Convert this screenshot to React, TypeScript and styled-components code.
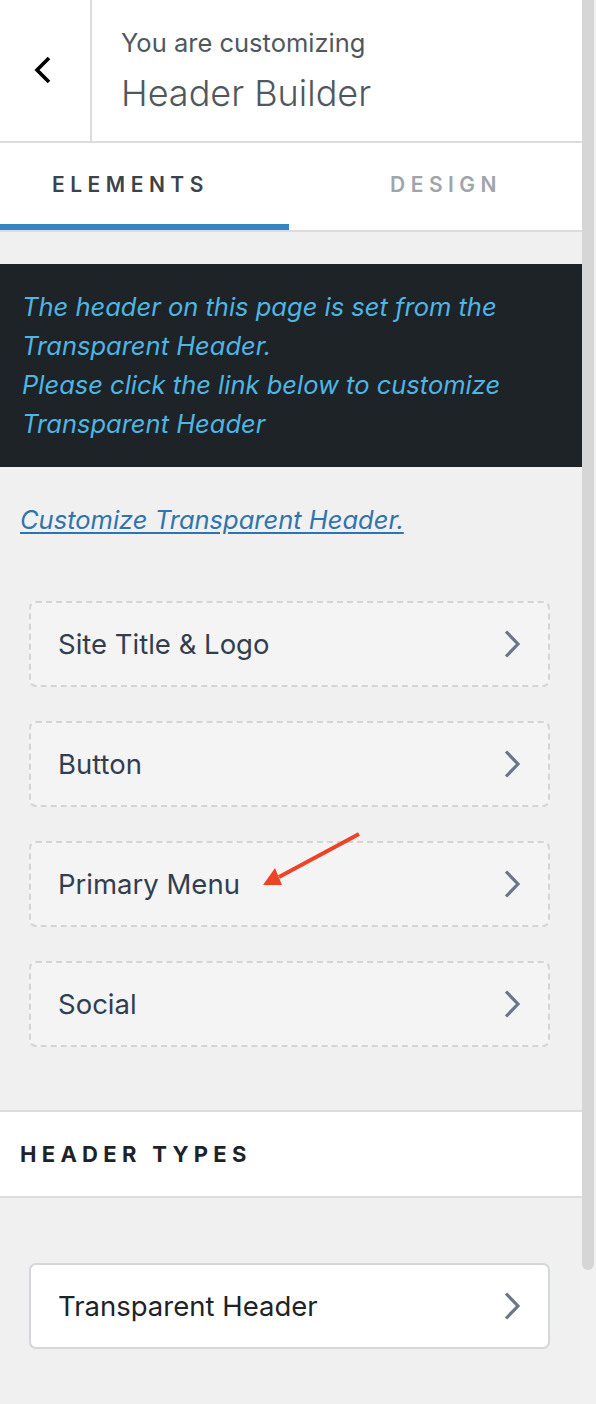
import React, { ReactElement } from 'react';
import styled, { createGlobalStyle } from 'styled-components';

const GlobalStyle = createGlobalStyle`
  html, body {
    margin: 0;
    padding: 0;
    background: #f0f0f1;
  }
  body {
    font-family: Inter, "Noto Sans", "Liberation Sans", sans-serif;
  }
  * {
    box-sizing: border-box;
  }
`;

const Page = styled.div`
  display: flex;
  width: 596px;
  height: 1404px;
  overflow: hidden;
  background: #f0f0f1;
`;

const Panel = styled.div`
  display: flex;
  flex-direction: column;
  width: 582px;
`;

const ScrollTrack = styled.div`
  width: 14px;
  padding-right: 2px;
  background: #f1f1f1;
`;

const ScrollThumb = styled.div`
  width: 12px;
  height: 1270px;
  background: #d6d6d6;
  border-radius: 0 0 6px 6px;
`;

const TopBar = styled.div`
  display: flex;
  height: 143px;
  background: #ffffff;
  border-bottom: 2px solid #dcdcde;
`;

const BackButton = styled.div`
  display: flex;
  align-items: center;
  justify-content: center;
  width: 92px;
  padding-right: 4px;
  border-right: 2px solid #dcdcde;
`;

const Info = styled.div`
  display: flex;
  flex-direction: column;
  padding: 28px 0 0 29px;
  color: #50575e;
`;

const Notice = styled.div`
  font-size: 25.5px;
  line-height: 30px;
`;

const PanelTitle = styled.div`
  margin-top: 14px;
  font-size: 36px;
  font-weight: 300;
  line-height: 42px;
`;

const Tabs = styled.div`
  display: flex;
  height: 89px;
  background: #ffffff;
  border-bottom: 2px solid #dcdcde;
`;

const Tab = styled.div<{ $active?: boolean; $pad: number; $width: number }>`
  display: flex;
  align-items: center;
  width: ${(p) => p.$width}px;
  padding-left: ${(p) => p.$pad}px;
  padding-top: 2px;
  font-size: 21px;
  font-weight: 600;
  letter-spacing: 5.5px;
  color: ${(p) => (p.$active ? '#3c434a' : '#a0a5aa')};
  border-bottom: 6px solid ${(p) => (p.$active ? '#3582c4' : 'transparent')};
`;

const Content = styled.div`
  display: flex;
  flex-direction: column;
  padding-top: 32px;
`;

const DarkNotice = styled.div`
  height: 203px;
  padding: 23px 20px 0 22px;
  background: #1d2327;
  color: #4fb5e3;
  font-size: 25.5px;
  font-style: italic;
  line-height: 39px;
`;

const CustomizeLink = styled.a`
  margin: 38px 0 0 20px;
  color: #2f74ad;
  font-size: 25.5px;
  font-style: italic;
  line-height: 30px;
  text-decoration: underline;
  text-underline-offset: 3px;
`;

const ItemList = styled.div`
  display: flex;
  flex-direction: column;
  gap: 34px;
  margin: 66px 32px 0 29px;
`;

const ItemCard = styled.div<{ $solid?: boolean }>`
  position: relative;
  display: flex;
  align-items: center;
  justify-content: space-between;
  height: 86px;
  padding: 0 27px 0 27px;
  border: 2px ${(p) => (p.$solid ? 'solid #d3d6da' : 'dashed #d2d4d8')};
  border-radius: 7px;
  background: ${(p) => (p.$solid ? '#ffffff' : '#f4f4f4')};
  color: ${(p) => (p.$solid ? '#1d2327' : '#323e4f')};
  font-size: 27.5px;
`;

const SectionHead = styled.div`
  display: flex;
  align-items: center;
  height: 88px;
  margin-top: 63px;
  padding-left: 20px;
  background: #ffffff;
  border-top: 2px solid #dcdcde;
  border-bottom: 2px solid #dcdcde;
  color: #1d2327;
  font-size: 22px;
  font-weight: 700;
  letter-spacing: 5.3px;
`;

const TypeList = styled.div`
  display: flex;
  flex-direction: column;
  margin: 65px 32px 0 29px;
`;

const Pointer = styled.svg`
  position: absolute;
  left: 223px;
  top: -20px;
  overflow: visible;
  pointer-events: none;
`;

const Chevron = (): ReactElement => (
  <svg width="18" height="30" viewBox="0 0 18 30">
    <polyline
      points="3,2.5 15,15 3,27.5"
      fill="none"
      stroke="#6b7789"
      strokeWidth="3.2"
    />
  </svg>
);

const BackChevron = (): ReactElement => (
  <svg width="20" height="30" viewBox="0 0 20 30">
    <polyline
      points="16,2 4,14 16,26"
      fill="none"
      stroke="#000000"
      strokeWidth="3.6"
    />
  </svg>
);

const RedArrow = (): ReactElement => (
  <Pointer width="140" height="80" viewBox="0 0 140 80">
    <line x1="105" y1="11" x2="25" y2="54" stroke="#ec4427" strokeWidth="4" />
    <polygon points="9,62 21,45 28,62" fill="#ec4427" />
  </Pointer>
);

const elements = ['Site Title & Logo', 'Button', 'Primary Menu', 'Social'];

const App = (): ReactElement => {
  return (
    <>
      <GlobalStyle />
      <Page>
        <Panel>
          <TopBar>
            <BackButton>
              <BackChevron />
            </BackButton>
            <Info>
              <Notice>You are customizing</Notice>
              <PanelTitle>Header Builder</PanelTitle>
            </Info>
          </TopBar>
          <Tabs>
            <Tab $active $pad={52} $width={289}>
              ELEMENTS
            </Tab>
            <Tab $pad={101} $width={293}>
              DESIGN
            </Tab>
          </Tabs>
          <Content>
            <DarkNotice>
              The header on this page is set from the
              <br />
              Transparent Header.
              <br />
              Please click the link below to customize
              <br />
              Transparent Header
            </DarkNotice>
            <CustomizeLink href="#">Customize Transparent Header.</CustomizeLink>
            <ItemList>
              {elements.map((name) => (
                <ItemCard key={name}>
                  {name}
                  <Chevron />
                  {name === 'Primary Menu' && <RedArrow />}
                </ItemCard>
              ))}
            </ItemList>
            <SectionHead>HEADER TYPES</SectionHead>
            <TypeList>
              <ItemCard $solid>
                Transparent Header
                <Chevron />
              </ItemCard>
            </TypeList>
          </Content>
        </Panel>
        <ScrollTrack>
          <ScrollThumb />
        </ScrollTrack>
      </Page>
    </>
  );
};

export default App;
